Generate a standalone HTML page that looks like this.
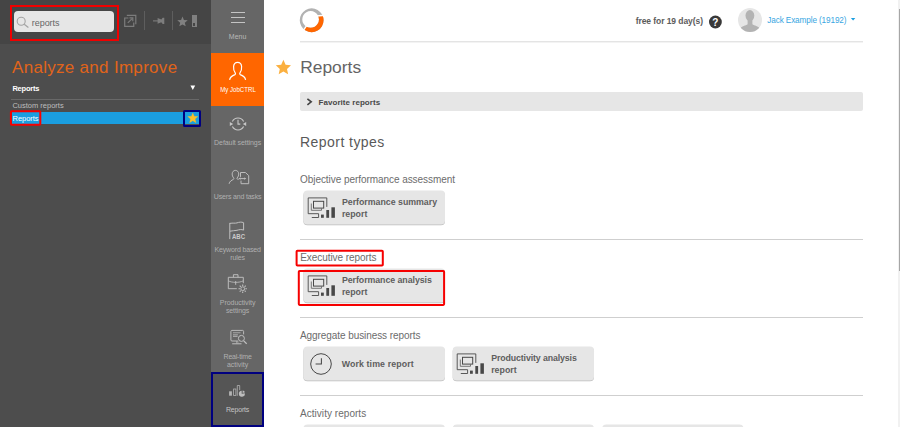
<!DOCTYPE html>
<html lang="en"><head><meta charset="utf-8"><title>Reports - JobCTRL</title>
<style>
html,body{margin:0;padding:0;}
body{width:900px;height:427px;overflow:hidden;background:#fff;position:relative;font-family:"Liberation Sans",sans-serif;}
.b{position:absolute;display:block;}
.t{position:absolute;white-space:nowrap;line-height:1;}
</style></head><body>
<aside aria-label="Navigation panel">
<div class="b" style="left:0px;top:0px;width:211px;height:427px;background:#4d4d4d;"></div>
<div class="b" style="left:0px;top:0px;width:211px;height:43.5px;background:#454545;"></div>
<div class="b" style="left:14px;top:11px;width:100px;height:21px;background:#e6e6e6;border-radius:4px;"></div>
<svg class="b" style="left:15px;top:14px" width="16" height="16" viewBox="0 0 16 16"><circle cx="6.2" cy="7.3" r="4" fill="none" stroke="#a4a4a4" stroke-width="1.1"/><path d="M9.2 10.2 L13.4 13.4" stroke="#a4a4a4" stroke-width="1.3" fill="none"/></svg>
<div class="t" style="left:31.80px;top:19.00px;font-size:9px;color:#666;letter-spacing:-0.05px;">reports</div>
<div class="b" style="left:10px;top:5px;width:109px;height:36px;border:2px solid #f00000;box-sizing:border-box;"></div>
<svg class="b" style="left:122px;top:13px" width="16" height="16" viewBox="0 0 16 16" fill="none" stroke="#7c7c7c" stroke-width="1.2"><path d="M6.4 5 H2.7 V13.4 H11.75 V9.4"/><path d="M4.8 2.3 H13.8 V11.3"/><path d="M5.8 9.9 L10.4 5.3"/><path d="M7.5 4.9 H10.8 V8.2"/></svg>
<div class="b" style="left:144px;top:11px;width:1px;height:19px;background:#5e5e5e;"></div>
<svg class="b" style="left:152px;top:15px" width="14" height="12" viewBox="0 0 14 12"><path d="M1 5.9 H7" stroke="#7d7d7d" stroke-width="1.1"/><path d="M5.6 3 L9.3 4.6 L10.7 2.7 H12.3 V9.1 H10.7 L9.3 7.2 L5.6 8.8 Z" fill="#7d7d7d"/></svg>
<div class="b" style="left:172px;top:11px;width:1px;height:19px;background:#5e5e5e;"></div>
<svg class="b" style="left:176px;top:15px" width="13" height="13" viewBox="0 0 13 13"><path d="M6.5 1.6 L7.9 5 L11.7 5.3 L8.8 7.7 L9.7 11.3 L6.5 9.4 L3.3 11.3 L4.2 7.7 L1.3 5.3 L5.1 5 Z" fill="#808080"/></svg>
<div class="b" style="left:192px;top:15.3px;width:4.6px;height:11.8px;background:#808080;"></div>
<div class="b" style="left:193.4px;top:23.4px;width:1.8px;height:2.6px;background:#454545;"></div>
<div class="t" style="left:12.00px;top:59.00px;font-size:17px;color:#e0641a;letter-spacing:0.3px;">Analyze and Improve</div>
<div class="t" style="left:12.40px;top:85.00px;font-size:7.5px;color:#ffffff;font-weight:700;letter-spacing:-0.2px;">Reports</div>
<svg class="b" style="left:190px;top:85px" width="6" height="6" viewBox="0 0 6 6"><path d="M0.4 0.6 H5.2 L2.8 4.9 Z" fill="#fff"/></svg>
<div class="b" style="left:11px;top:99px;width:188.3px;height:1px;background:#686868;"></div>
<div class="t" style="left:12.40px;top:102.00px;font-size:7.5px;color:#bdbdbd;">Custom reports</div>
<div class="b" style="left:12px;top:112px;width:188px;height:12px;background:#1a9ee0;"></div>
<div class="t" style="left:12.60px;top:115.00px;font-size:7.5px;color:#ffffff;letter-spacing:-0.05px;">Reports</div>
<svg class="b" style="left:8px;top:109px" width="35" height="19" viewBox="0 0 35 19"><rect x="2.90" y="2.20" width="29.40" height="13.50" rx="0.8" fill="none" stroke="#f60000" stroke-width="2.0"/></svg>
<div class="b" style="left:183px;top:110px;width:18.4px;height:17px;border:2px solid #000080;box-sizing:border-box;border-radius:1.5px;"></div>
<svg class="b" style="left:187px;top:112px" width="12" height="12" viewBox="0 0 12 12"><path d="M5.8 0.9 L7.2 4.3 L10.9 4.6 L8.1 7 L9 10.7 L5.8 8.7 L2.6 10.7 L3.5 7 L0.7 4.6 L4.4 4.3 Z" fill="#fdc02a" stroke="#fdc02a" stroke-width="0.3" stroke-linejoin="round"/></svg>
</aside>
<nav aria-label="Main menu">
<div class="b" style="left:211px;top:0px;width:53px;height:427px;background:#666666;"></div>
<div class="b" style="left:230.5px;top:12px;width:14.2px;height:1.3px;background:#c4c4c4;"></div>
<div class="b" style="left:230.5px;top:17px;width:14.2px;height:1.3px;background:#c4c4c4;"></div>
<div class="b" style="left:230.5px;top:22px;width:14.2px;height:1.3px;background:#c4c4c4;"></div>
<div class="t" style="left:177.60px;width:120px;text-align:center;top:33.00px;font-size:7px;color:#b8b8b8;">Menu</div>
<div class="b" style="left:211px;top:53px;width:53px;height:53px;background:#ff6600;"></div>
<svg class="b" style="left:227px;top:60px" width="22" height="22" viewBox="0 0 22 22" fill="none" stroke="#fff" stroke-width="1.2"><path d="M2.6 19.8 C3.2 16.6 5.2 15.6 8 14.6 C8.6 14.2 8.6 13.4 8.2 12.8 C6.6 10.8 6.4 8.6 6.6 6.4 C6.9 3.8 8.4 2.4 10.6 2.4 C12.8 2.4 14.3 3.8 14.6 6.4 C14.8 8.6 14.6 10.8 13 12.8 C12.6 13.4 12.6 14.2 13.2 14.6 C16 15.6 18 16.6 18.6 19.8"/></svg>
<div class="t" style="left:177.60px;width:120px;text-align:center;top:86.00px;font-size:7px;color:#ffffff;transform:scaleX(0.87);transform-origin:center center;">My JobCTRL</div>
<svg class="b" style="left:229px;top:115px" width="18" height="18" viewBox="0 0 18 18" fill="none" stroke="#c6c6c6" stroke-width="1.15"><path d="M3.4 6.4 A6.3 6.3 0 0 1 14.6 6.4"/><path d="M3.4 11.6 A6.3 6.3 0 0 0 14.6 11.6"/><path d="M9 4.8 V9.1 H11.3" stroke-width="1.1"/><path d="M0.8 7 L4.2 9 L0.8 11 Z" fill="#c6c6c6" stroke="none"/><path d="M17.2 7 L13.8 9 L17.2 11 Z" fill="#c6c6c6" stroke="none"/></svg>
<div class="t" style="left:177.60px;width:120px;text-align:center;top:139.00px;font-size:7px;color:#b0b0b0;letter-spacing:-0.08px;">Default settings</div>
<svg class="b" style="left:225px;top:166px" width="28" height="22" viewBox="0 0 28 22" fill="none" stroke="#c2c2c2" stroke-width="0.95"><path d="M4.1 17.8 C4.6 15.2 6.6 14.3 8.4 13.4 C9 13 9 12.4 8.6 11.9 C7.5 10.6 7.2 9.2 7.2 7.9 C7.2 5.8 8.6 4.4 10.4 4.4 C12.2 4.4 13.7 5.8 13.7 7.9 C13.7 9.2 13.3 10.6 12.2 11.9 C11.8 12.4 11.9 12.9 12.6 13.2 L13.6 13.4"/><path d="M15.5 10.9 V6.5 H20.4 L23.7 9.6 V17.7 H16 V14.6"/><path d="M15.4 12.6 H19.4"/><path d="M13.4 12.6 L15.7 11.4 V13.8 Z M21.4 12.6 L19.1 11.4 V13.8 Z" fill="#c2c2c2" stroke="none"/></svg>
<div class="t" style="left:177.60px;width:120px;text-align:center;top:193.00px;font-size:7px;color:#b0b0b0;letter-spacing:-0.18px;">Users and tasks</div>
<svg class="b" style="left:225px;top:219px" width="28" height="22" viewBox="0 0 28 22" fill="none" stroke="#c0c0c0" stroke-width="1"><path d="M4.8 3.9 V20.1"/><path d="M4.8 4.4 C8 3.8 10 4.5 12 3.9 C14 3.1 16.5 2.7 18.6 3.7 V11.1 C16.5 10.2 14 10.6 12 11.3 C10 11.9 7.5 11.5 4.9 12.2"/></svg>
<div class="t" style="left:232.00px;top:234.00px;font-size:6.7px;color:#cacaca;font-weight:700;transform:scaleX(0.9);transform-origin:left center;">ABC</div>
<div class="t" style="left:177.60px;width:120px;text-align:center;top:246.00px;font-size:7px;color:#b0b0b0;letter-spacing:-0.15px;">Keyword based</div>
<div class="t" style="left:177.60px;width:120px;text-align:center;top:254.00px;font-size:7px;color:#b0b0b0;letter-spacing:-0.1px;">rules</div>
<svg class="b" style="left:225px;top:271px" width="28" height="24" viewBox="0 0 28 24" fill="none" stroke="#c0c0c0" stroke-width="0.95"><path d="M8.4 6.3 V3.7 H13 V6.3"/><path d="M11.8 17.7 H3.3 V6.3 H18.3 V12.2"/><path d="M3.3 9.8 C7 11.9 14.5 11.9 18.3 9.8" stroke-width="0.8"/><path d="M10.7 10.1 V13.8"/><circle cx="17.7" cy="17.7" r="1.9"/><path d="M17.7 13.5 V15 M17.7 20.4 V21.9 M13.5 17.7 H15 M20.4 17.7 H21.9 M14.7 14.7 L15.8 15.8 M19.6 19.6 L20.7 20.7 M14.7 20.7 L15.8 19.6 M19.6 15.8 L20.7 14.7" stroke-width="1.1"/></svg>
<div class="t" style="left:177.60px;width:120px;text-align:center;top:299.00px;font-size:7px;color:#b0b0b0;letter-spacing:-0.05px;">Productivity</div>
<div class="t" style="left:177.60px;width:120px;text-align:center;top:307.00px;font-size:7px;color:#b0b0b0;letter-spacing:-0.1px;">settings</div>
<svg class="b" style="left:225px;top:326px" width="28" height="22" viewBox="0 0 28 22" fill="none" stroke="#c0c0c0" stroke-width="0.95"><path d="M12.9 15 H6.9 C6.3 15 5.9 14.6 5.9 14 V5.4 C5.9 4.8 6.3 4.4 6.9 4.4 H17.6 C18.2 4.4 18.6 4.8 18.6 5.4 V8.4"/><path d="M8 6.7 H15.5 M8 8.7 H12.9 M8 10.4 H12.6" stroke-width="1.1" stroke="#a6a6a6"/><path d="M11.6 15 V17.4 M12.9 15 V17.4" stroke-width="0.6"/><path d="M7.2 17.8 H16.5" stroke-width="1"/><circle cx="16.4" cy="12.4" r="3" stroke-width="1"/><path d="M18.7 14.9 L21.7 17.8" stroke-width="1.2"/></svg>
<div class="t" style="left:177.60px;width:120px;text-align:center;top:353.00px;font-size:7px;color:#b0b0b0;letter-spacing:-0.22px;">Real-time</div>
<div class="t" style="left:177.60px;width:120px;text-align:center;top:361.00px;font-size:7px;color:#b0b0b0;">activity</div>
<div class="b" style="left:211px;top:372px;width:53px;height:54.5px;background:#555555;border:2px solid #000080;box-sizing:border-box;"></div>
<svg class="b" style="left:225px;top:380px" width="28" height="20" viewBox="0 0 28 20" fill="none" stroke="#b4b4b4" stroke-width="0.8"><rect x="4.1" y="11.3" width="2.8" height="4.4" fill="#b4b4b4" stroke="none"/><rect x="8.6" y="9" width="2.3" height="6.4"/><path d="M12.3 15.8 V5.5 H14.7 V10.2"/><path d="M16.7 13.8 L16.7 10.7 A3 3 0 1 0 19.8 13.2 Z" fill="#bcbcbc" stroke="none"/><path d="M17.6 12.9 V10.4 A3 3 0 0 1 20 12.2 Z" fill="#bcbcbc" stroke="none"/></svg>
<div class="t" style="left:177.60px;width:120px;text-align:center;top:406.00px;font-size:7px;color:#c4c4c4;letter-spacing:-0.19px;">Reports</div>
</nav>
<main>
<svg class="b" style="left:296px;top:5px" width="32" height="32" viewBox="0 0 32 32"><defs><clipPath id="lg"><polygon points="21,10.95 32,9.9 32,32 3,32 6.6,26.6 10.6,20.6 14.6,14.4"/></clipPath></defs><path d="M15.67 3.35 A11.9 11.9 0 1 1 15.66 3.35 Z M14.62 6.08 A8.35 8.35 0 1 0 14.63 6.08 Z" fill="#b2b2b2" fill-rule="evenodd"/><path d="M15.67 3.35 A11.9 11.9 0 1 1 15.66 3.35 Z M14.62 6.08 A8.35 8.35 0 1 0 14.63 6.08 Z" fill="#ff6600" fill-rule="evenodd" clip-path="url(#lg)"/><path d="M20.5 11 L29 10.2" stroke="#fff" stroke-width="1.6"/><path d="M6.4 26.9 L10.8 20.3" stroke="#fff" stroke-width="1.3"/></svg>
<div class="b" style="left:300px;top:41px;width:562.5px;height:1px;background:#e4e4e4;"></div>
<div class="b" style="left:300px;top:42px;width:562.5px;height:1px;background:#f3f3f3;"></div>
<div class="t" style="left:635.70px;top:17.00px;font-size:8.5px;color:#5c5c5c;font-weight:700;letter-spacing:-0.07px;">free for 19 day(s)</div>
<svg class="b" style="left:708px;top:14px" width="16" height="16" viewBox="0 0 16 16"><circle cx="7.4" cy="8" r="6.4" fill="#383838"/><text x="7.4" y="11.5" text-anchor="middle" font-family="Liberation Sans, sans-serif" font-weight="700" font-size="10" fill="#fff">?</text></svg>
<svg class="b" style="left:737px;top:7px" width="26" height="26" viewBox="0 0 26 26"><defs><clipPath id="av"><circle cx="13" cy="13.1" r="12"/></clipPath></defs><circle cx="13" cy="13.1" r="12" fill="#e6e6e6"/><g clip-path="url(#av)" fill="#b3b3b3"><ellipse cx="12.9" cy="8.6" rx="4.4" ry="5.6"/><path d="M10.6 12 H15.4 V17 C15.4 18 20.5 19 22 20.4 C23.4 21.8 23 26 23 26 H3 C3 26 2.6 21.8 4 20.4 C5.5 19 10.6 18 10.6 17 Z"/></g></svg>
<div class="t" style="left:767.30px;top:17.00px;font-size:8.2px;color:#38a6e2;letter-spacing:-0.12px;">Jack Example (19192)</div>
<svg class="b" style="left:850px;top:17px" width="7" height="5" viewBox="0 0 7 5"><path d="M0.9 1 H5.3 L3.1 3.4 Z" fill="#1a9ee0"/></svg>
<svg class="b" style="left:274px;top:58px" width="18" height="18" viewBox="0 0 18 18"><path d="M9.4 1.7 L11.6 6.7 L17 7.3 L13 10.9 L14.1 16.2 L9.4 13.5 L4.7 16.2 L5.8 10.9 L1.8 7.3 L7.2 6.7 Z" fill="#fbb040"/></svg>
<div class="t" style="left:300.20px;top:59.00px;font-size:17.4px;color:#646464;">Reports</div>
<div class="b" style="left:300px;top:92.3px;width:562.5px;height:18.6px;background:#e6e6e6;border-radius:2px;"></div>
<svg class="b" style="left:305px;top:97px" width="9" height="9" viewBox="0 0 9 9"><path d="M2.4 1.8 L6.2 4.8 L2.4 7.8" fill="none" stroke="#444" stroke-width="1.6"/></svg>
<div class="t" style="left:318.60px;top:99.00px;font-size:8px;color:#484848;font-weight:700;letter-spacing:0.04px;">Favorite reports</div>
<div class="t" style="left:300.00px;top:135.00px;font-size:14px;color:#595959;letter-spacing:0.45px;">Report types</div>
<div class="t" style="left:300.00px;top:175.00px;font-size:10px;color:#6c6c6c;letter-spacing:-0.055px;">Objective performance assessment</div>
<svg class="b" style="left:302px;top:189px" width="145" height="39" viewBox="0 0 145 39"><rect x="1.40" y="2.50" width="141.60" height="33.8" rx="4" fill="#bdbdbd"/><rect x="1.40" y="1.60" width="141.60" height="33.8" rx="4" fill="#e6e6e6"/></svg>
<svg class="b" style="left:306.6px;top:196.0px" width="30" height="24" viewBox="0 0 30 24" fill="none" stroke="#484848" stroke-width="0.9"><path d="M19.8 10.9 V1.9 H1.2 V17.7 H11.6 V21.5 H4.8"/><rect x="6.5" y="5.3" width="10.2" height="6.8" stroke-width="1"/><path d="M4.3 7.5 V14.3 H14.5 V12.2" stroke="#6a6a6a"/><rect x="14" y="18.6" width="2.8" height="3.2" fill="#484848" stroke="none"/><rect x="19.3" y="14" width="2.8" height="7.8" fill="#484848" stroke="none"/><rect x="24.4" y="11.3" width="3.5" height="10.5" fill="#484848" stroke="none"/></svg>
<div class="t" style="left:341.90px;top:198.00px;font-size:8.8px;color:#5e5e5e;font-weight:700;letter-spacing:-0.01px;">Performance summary</div>
<div class="t" style="left:341.90px;top:210.00px;font-size:8.8px;color:#5e5e5e;font-weight:700;">report</div>
<div class="b" style="left:300px;top:238.7px;width:562.5px;height:1px;background:#cfcfcf;"></div>
<div class="t" style="left:300.20px;top:253.00px;font-size:10px;color:#6c6c6c;letter-spacing:-0.06px;">Executive reports</div>
<svg class="b" style="left:302px;top:267px" width="145" height="39" viewBox="0 0 145 39"><rect x="1.40" y="2.50" width="141.60" height="33.8" rx="4" fill="#bdbdbd"/><rect x="1.40" y="1.60" width="141.60" height="33.8" rx="4" fill="#e6e6e6"/></svg>
<svg class="b" style="left:306.6px;top:274.0px" width="30" height="24" viewBox="0 0 30 24" fill="none" stroke="#484848" stroke-width="0.9"><path d="M19.8 10.9 V1.9 H1.2 V17.7 H11.6 V21.5 H4.8"/><rect x="6.5" y="5.3" width="10.2" height="6.8" stroke-width="1"/><path d="M4.3 7.5 V14.3 H14.5 V12.2" stroke="#6a6a6a"/><rect x="14" y="18.6" width="2.8" height="3.2" fill="#484848" stroke="none"/><rect x="19.3" y="14" width="2.8" height="7.8" fill="#484848" stroke="none"/><rect x="24.4" y="11.3" width="3.5" height="10.5" fill="#484848" stroke="none"/></svg>
<div class="t" style="left:341.90px;top:276.00px;font-size:8.8px;color:#5e5e5e;font-weight:700;letter-spacing:-0.05px;">Performance analysis</div>
<div class="t" style="left:341.90px;top:288.00px;font-size:8.8px;color:#5e5e5e;font-weight:700;">report</div>
<svg class="b" style="left:294px;top:248px" width="92" height="20" viewBox="0 0 92 20"><rect x="2.60" y="2.80" width="86.20" height="14.80" rx="0.8" fill="none" stroke="#f60000" stroke-width="2.0"/></svg>
<svg class="b" style="left:296px;top:268px" width="151" height="39" viewBox="0 0 151 39"><rect x="2.80" y="2.90" width="145.30" height="34.00" rx="0.8" fill="none" stroke="#f60000" stroke-width="2.0"/></svg>
<div class="b" style="left:300px;top:316.7px;width:562.5px;height:1px;background:#cfcfcf;"></div>
<div class="t" style="left:300.00px;top:331.00px;font-size:10px;color:#6c6c6c;letter-spacing:-0.076px;">Aggregate business reports</div>
<svg class="b" style="left:302px;top:345px" width="145" height="39" viewBox="0 0 145 39"><rect x="1.40" y="2.50" width="141.60" height="33.8" rx="4" fill="#bdbdbd"/><rect x="1.40" y="1.60" width="141.60" height="33.8" rx="4" fill="#e6e6e6"/></svg>
<svg class="b" style="left:309.1px;top:351.9px" width="24" height="24" viewBox="0 0 24 24" fill="none" stroke="#484848" stroke-width="0.9"><circle cx="12" cy="12" r="10.3" stroke-width="1"/><path d="M12.4 6.2 V12 H6.6" stroke-width="1.05"/></svg>
<div class="t" style="left:341.70px;top:360.00px;font-size:8.8px;color:#5e5e5e;font-weight:700;letter-spacing:0.12px;">Work time report</div>
<svg class="b" style="left:451px;top:345px" width="145" height="39" viewBox="0 0 145 39"><rect x="1.70" y="2.50" width="141.30" height="33.8" rx="4" fill="#bdbdbd"/><rect x="1.70" y="1.60" width="141.30" height="33.8" rx="4" fill="#e6e6e6"/></svg>
<svg class="b" style="left:455.9px;top:352.0px" width="30" height="24" viewBox="0 0 30 24" fill="none" stroke="#484848" stroke-width="0.9"><path d="M19.8 10.9 V1.9 H1.2 V17.7 H11.6 V21.5 H4.8"/><rect x="6.5" y="5.3" width="10.2" height="6.8" stroke-width="1"/><path d="M4.3 7.5 V14.3 H14.5 V12.2" stroke="#6a6a6a"/><rect x="14" y="18.6" width="2.8" height="3.2" fill="#484848" stroke="none"/><rect x="19.3" y="14" width="2.8" height="7.8" fill="#484848" stroke="none"/><rect x="24.4" y="11.3" width="3.5" height="10.5" fill="#484848" stroke="none"/></svg>
<div class="t" style="left:491.20px;top:354.00px;font-size:8.8px;color:#5e5e5e;font-weight:700;letter-spacing:-0.12px;">Productivity analysis</div>
<div class="t" style="left:491.20px;top:366.00px;font-size:8.8px;color:#5e5e5e;font-weight:700;">report</div>
<div class="b" style="left:300px;top:394.8px;width:562.5px;height:1px;background:#cfcfcf;"></div>
<div class="t" style="left:300.00px;top:409.00px;font-size:10px;color:#6c6c6c;letter-spacing:0.04px;">Activity reports</div>
<svg class="b" style="left:302px;top:423px" width="145" height="39" viewBox="0 0 145 39"><rect x="1.40" y="2.50" width="141.60" height="33.8" rx="4" fill="#bdbdbd"/><rect x="1.40" y="1.60" width="141.60" height="33.8" rx="4" fill="#e6e6e6"/></svg>
<svg class="b" style="left:309.1px;top:429.9px" width="24" height="24" viewBox="0 0 24 24" fill="none" stroke="#484848" stroke-width="0.9"><circle cx="12" cy="12" r="10.3" stroke-width="1"/><path d="M12.4 6.2 V12 H6.6" stroke-width="1.05"/></svg>
<div class="t" style="left:341.70px;top:438.00px;font-size:8.8px;color:#5e5e5e;font-weight:700;">Activity report</div>
<svg class="b" style="left:451px;top:423px" width="145" height="39" viewBox="0 0 145 39"><rect x="1.70" y="2.50" width="141.30" height="33.8" rx="4" fill="#bdbdbd"/><rect x="1.70" y="1.60" width="141.30" height="33.8" rx="4" fill="#e6e6e6"/></svg>
<svg class="b" style="left:458.4px;top:429.9px" width="24" height="24" viewBox="0 0 24 24" fill="none" stroke="#484848" stroke-width="0.9"><circle cx="12" cy="12" r="10.3" stroke-width="1"/><path d="M12.4 6.2 V12 H6.6" stroke-width="1.05"/></svg>
<div class="t" style="left:491.00px;top:438.00px;font-size:8.8px;color:#5e5e5e;font-weight:700;">Activity report</div>
<svg class="b" style="left:601px;top:423px" width="145" height="39" viewBox="0 0 145 39"><rect x="1.20" y="2.50" width="141.30" height="33.8" rx="4" fill="#bdbdbd"/><rect x="1.20" y="1.60" width="141.30" height="33.8" rx="4" fill="#e6e6e6"/></svg>
<svg class="b" style="left:607.9px;top:429.9px" width="24" height="24" viewBox="0 0 24 24" fill="none" stroke="#484848" stroke-width="0.9"><circle cx="12" cy="12" r="10.3" stroke-width="1"/><path d="M12.4 6.2 V12 H6.6" stroke-width="1.05"/></svg>
<div class="t" style="left:640.50px;top:438.00px;font-size:8.8px;color:#5e5e5e;font-weight:700;">Activity report</div>
</main>
<div class="b" style="left:898px;top:0px;width:2px;height:427px;background:#f1f1f1;"></div>
<div class="b" style="left:898.8px;top:9px;width:1.2px;height:262px;background:#a6a6a6;"></div>
</body></html>
